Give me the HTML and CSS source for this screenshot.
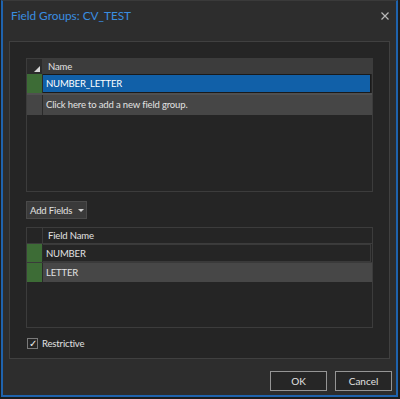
FILE: index.html
```html
<!DOCTYPE html>
<html lang="en">
<head>
    <meta charset="UTF-8">
    <title>Field Groups: CV_TEST</title>
    <link rel="stylesheet" href="styles.css">
</head>
<body>
    <div class="dialog">
        <div class="titlebar">
            <span class="title">Field Groups: CV_TEST</span>
            <svg class="close" width="8" height="8" viewBox="0 0 8 8">
                <path d="M0.5 0.5L7.5 7.5M7.5 0.5L0.5 7.5" stroke="#b8b8b8" stroke-width="1.2"/>
            </svg>
        </div>
        <div class="panel">
            <div class="grid groups">
                <div class="row head">
                    <div class="corner"><span class="tri"></span></div>
                    <div class="cell">Name</div>
                </div>
                <div class="row selected">
                    <div class="rowhead green"></div>
                    <div class="cell">NUMBER_LETTER</div>
                </div>
                <div class="row newrow">
                    <div class="rowhead"></div>
                    <div class="cell">Click here to add a new field group.</div>
                </div>
            </div>

            <button class="dropdown">Add Fields <span class="caret"></span></button>

            <div class="grid fields">
                <div class="row head">
                    <div class="corner"></div>
                    <div class="cell">Field Name</div>
                </div>
                <div class="row">
                    <div class="rowhead green"></div>
                    <div class="cell boxed">NUMBER</div>
                </div>
                <div class="row alt">
                    <div class="rowhead green"></div>
                    <div class="cell">LETTER</div>
                </div>
            </div>

            <label class="check">
                <span class="box">&#x2713;</span>
                Restrictive
            </label>
        </div>
        <div class="actions">
            <button class="btn">OK</button>
            <button class="btn">Cancel</button>
        </div>
    </div>
</body>
</html>
```

FILE: styles.css
```css
body {
    margin: 0;
    background: #1c1c1c;
    font-family: 'Lato', sans-serif;
    font-size: 9.5px;
    letter-spacing: -0.15px;
    color: #e2e2e2;
}
.dialog {
    margin-left: 1px;
    width: 397px;
    height: 397px;
    box-sizing: border-box;
    border: 2px solid #1f63ad;
    border-top: 1px solid #3a3a3a;
    background: #2d2d2d;
    padding: 0 0 0 6px;
}
.titlebar {
    height: 40px;
    display: flex;
    justify-content: space-between;
    align-items: flex-start;
    padding: 7px 7px 0 2px;
    box-sizing: border-box;
}
.title {
    color: #3a8ee0;
    font-size: 11.8px;
    letter-spacing: 0;
}
.close {
    margin-top: 4px;
}
.panel {
    width: 381px;
    height: 318px;
    box-sizing: border-box;
    border: 1px solid #404040;
    background: #252525;
    padding: 16px 16px 0 16px;
}
.grid {
    border: 1px solid #3c3c3c;
    background: #252525;
}
.groups {
    height: 134px;
    box-sizing: border-box;
}
.fields {
    height: 101px;
    box-sizing: border-box;
}
.row {
    display: flex;
    height: 19px;
}
.fields .row {
    height: 18px;
}
.row.head {
    height: 15px;
}
.corner {
    width: 15px;
    position: relative;
    border-right: 1px solid #3c3c3c;
}
.tri {
    position: absolute;
    right: 2px;
    bottom: 2px;
    width: 0;
    height: 0;
    border-left: 6px solid transparent;
    border-bottom: 6px solid #d8d8d8;
}
.rowhead {
    width: 15px;
    background: #454545;
    border-right: 1px solid #2a2a2a;
}
.rowhead.green {
    background: #3d6c36;
}
.cell {
    flex: 1;
    padding-left: 3px;
    line-height: 17px;
    white-space: nowrap;
}
.head .cell {
    padding-left: 5px;
    line-height: 15px;
}
.groups .head .cell {
    background: #3c3c3c;
}
.groups .head .corner {
    background: #2b2b2b;
}
.selected .cell {
    background: #1160a8;
    color: #ffffff;
    border: 1px solid #1a1a1a;
    border-left: none;
    margin-right: 1px;
}
.newrow {
    height: 20px;
    border-top: 2px solid #505050;
}
.newrow .cell {
    background: #464646;
    line-height: 20px;
}
.fields .head {
    border-bottom: 1px solid #3c3c3c;
}
.boxed {
    border: 1px solid #3a3a3a;
    border-left: none;
    margin-right: 1px;
}
.alt {
    border-top: 1px solid #3a3a3a;
}
.fields .alt {
    height: 19px;
}
.alt .cell {
    background: #474747;
    line-height: 19px;
}
.dropdown {
    margin: 9px 0 8px 0;
    height: 18px;
    width: 61px;
    padding: 0 0 0 3px;
    background: #3a3a3a;
    border: 1px solid #4a4a4a;
    color: #e2e2e2;
    font-family: inherit;
    font-size: 9.5px;
    letter-spacing: -0.15px;
    white-space: nowrap;
    display: flex;
    align-items: center;
    gap: 6px;
}
.caret {
    width: 0;
    height: 0;
    border-left: 3px solid transparent;
    border-right: 3px solid transparent;
    border-top: 3px solid #cfcfcf;
}
.check {
    display: flex;
    align-items: center;
    gap: 4px;
    margin: 10px 0 0 1px;
}
.box {
    width: 9px;
    height: 9px;
    border: 1px solid #7a7a7a;
    font-size: 10px;
    line-height: 9px;
    text-align: center;
    color: #f0f0f0;
}
.actions {
    display: flex;
    justify-content: flex-end;
    gap: 8px;
    padding: 12px 4px 0 0;
}
.btn {
    width: 57px;
    height: 20px;
    background: #262626;
    border: 1px solid #959595;
    color: #e2e2e2;
    font-family: inherit;
    font-size: 10px;
    padding: 0;
}
```
